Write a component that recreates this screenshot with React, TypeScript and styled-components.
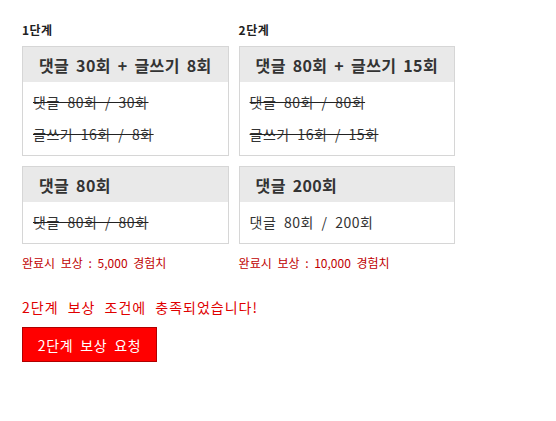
import styled, { createGlobalStyle } from "styled-components";

const GlobalStyle = createGlobalStyle`
  body {
    margin: 0;
    background: #fff;
    font-family: "Noto Sans CJK KR", "Noto Sans", sans-serif;
    color: #333;
  }
`;

type Mission = {
  title: string;
  rows: { text: string; done: boolean }[];
};

type Stage = {
  label: string;
  missions: Mission[];
  reward: string;
};

const stages: Stage[] = [
  {
    label: "1단계",
    missions: [
      {
        title: "댓글 30회 + 글쓰기 8회",
        rows: [
          { text: "댓글 80회 / 30화", done: true },
          { text: "글쓰기 16회 / 8화", done: true },
        ],
      },
      {
        title: "댓글 80회",
        rows: [{ text: "댓글 80회 / 80회", done: true }],
      },
    ],
    reward: "완료시 보상 : 5,000 경험치",
  },
  {
    label: "2단계",
    missions: [
      {
        title: "댓글 80회 + 글쓰기 15회",
        rows: [
          { text: "댓글 80회 / 80회", done: true },
          { text: "글쓰기 16회 / 15회", done: true },
        ],
      },
      {
        title: "댓글 200회",
        rows: [{ text: "댓글 80회 / 200회", done: false }],
      },
    ],
    reward: "완료시 보상 : 10,000 경험치",
  },
];

export default function App() {
  return (
    <>
      <GlobalStyle />
      <Page>
        <Stages>
          {stages.map((stage) => (
            <StageColumn key={stage.label}>
              <StageLabel>{stage.label}</StageLabel>
              {stage.missions.map((m) => (
                <MissionBox key={m.title}>
                  <MissionHead>{m.title}</MissionHead>
                  <MissionBody>
                    {m.rows.map((r) => (
                      <Progress key={r.text} $done={r.done}>
                        {r.text}
                      </Progress>
                    ))}
                  </MissionBody>
                </MissionBox>
              ))}
              <Reward>{stage.reward}</Reward>
            </StageColumn>
          ))}
        </Stages>
        <Notice>2단계 보상 조건에 충족되었습니다!</Notice>
        <RequestButton type="button">2단계 보상 요청</RequestButton>
      </Page>
    </>
  );
}

const Page = styled.div`
  padding: 22px 22px;
  display: flex;
  flex-direction: column;
  align-items: flex-start;
`;

const Stages = styled.div`
  display: flex;
  gap: 10px;
  align-items: flex-start;
`;

const StageColumn = styled.div`
  display: flex;
  flex-direction: column;
`;

const StageLabel = styled.div`
  font-size: 12px;
  font-weight: 700;
  line-height: 16px;
  letter-spacing: 0.5px;
  color: #222;
  margin-bottom: 8px;
`;

const MissionBox = styled.div`
  border: 1px solid #d6d6d6;
  margin-bottom: 10px;
  background: #fff;
`;

const MissionHead = styled.div`
  background: #e9e9e9;
  height: 35px;
  padding: 0 16px 0 16px;
  display: flex;
  align-items: center;
  font-size: 16px;
  font-weight: 700;
  letter-spacing: 0.35px;
  word-spacing: 3px;
  color: #333;
  white-space: nowrap;
`;

const MissionBody = styled.div`
  padding: 4px 10px 5px;
`;

const Progress = styled.div<{ $done: boolean }>`
  line-height: 32px;
  font-size: 14px;
  letter-spacing: 0.5px;
  word-spacing: 4px;
  color: #333;
  text-decoration: ${(p) => (p.$done ? "line-through" : "none")};
  text-decoration-color: #222;
`;

const Reward = styled.div`
  font-size: 12px;
  line-height: 16px;
  word-spacing: 3px;
  color: #c00000;
  margin-top: 1px;
`;

const Notice = styled.p`
  margin: 26px 0 10px;
  font-size: 14px;
  line-height: 20px;
  letter-spacing: 1px;
  word-spacing: 5px;
  color: #e00000;
`;

const RequestButton = styled.button`
  width: 135px;
  height: 35px;
  background: #ff0000;
  border: 1px solid #b00000;
  color: #fff;
  font-family: inherit;
  font-size: 14px;
  letter-spacing: 0.7px;
  word-spacing: 3px;
  padding: 0;
  cursor: pointer;
`;
